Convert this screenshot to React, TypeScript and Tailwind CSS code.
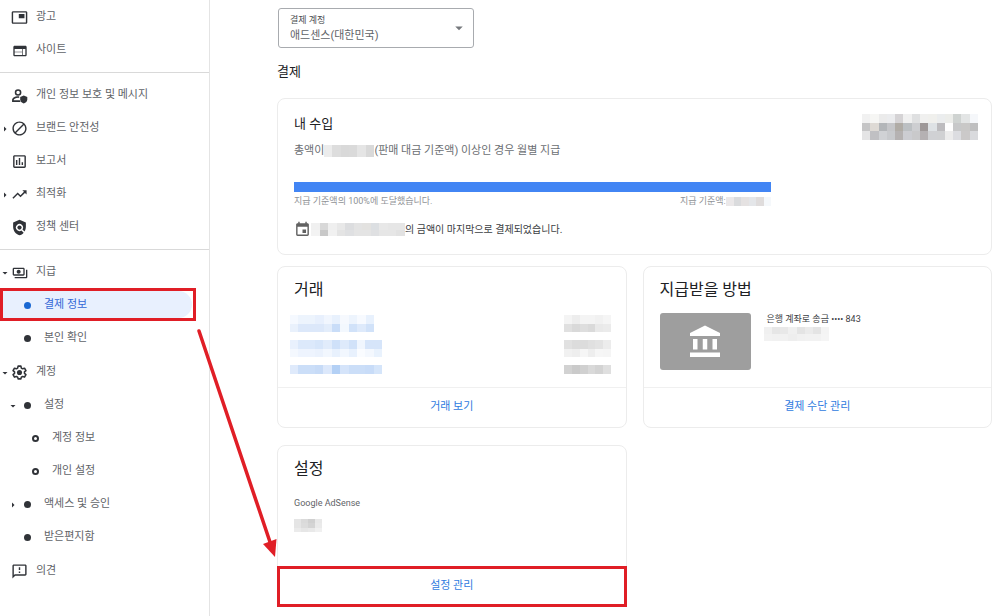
import React from 'react';
import {
  MdAccountBalance,
  MdArrowDropDown,
  MdArrowRight,
  MdBlock,
  MdEvent,
  MdOutlineAssessment,
  MdOutlineFeedback,
  MdOutlinePayments,
  MdPictureInPicture,
  MdPolicy,
  MdTrendingUp,
  MdWeb,
} from 'react-icons/md';

function PrivacyIcon() {
  return (
    <svg viewBox="0 0 24 24" width="17" height="17" fill="currentColor">
      <path
        fillRule="evenodd"
        d="M10 3a4.700 4.700 0 1 0 0 9.400A4.700 4.700 0 0 0 10 3zm0 2.200a2.500 2.500 0 1 1 0 5 2.500 2.500 0 0 1 0-5z"
      />
      <path d="M10 13c-4 0-8.500 1.900-8.500 5.300V21h12a9 9 0 0 1-1-2.300H3.800v-.4c0-1.200 3.200-3 6.200-3l1.500.1V13.100z" />
      <path d="M18 12l-5 2v3.300c0 3 2 5 5 5.900 3-.9 5-2.900 5-5.900V14z" />
    </svg>
  );
}

function GearIcon() {
  return (
    <svg viewBox="0 0 24 24" width="17" height="17" fill="none" stroke="currentColor">
      <path
        strokeWidth="2.200"
        strokeLinejoin="round"
        d="M10 3h4l.6 2.800 1.800 1 2.700-.9 2 3.500-2.100 1.800v2l2.100 1.800-2 3.500-2.700-.9-1.800 1L14 21h-4l-.6-2.400-1.800-1-2.700.9-2-3.500L5 13.200v-2L2.900 9.400l2-3.500 2.700.9 1.800-1z"
      />
      <circle cx="12" cy="12" r="3.600" fill="currentColor" stroke="none" />
    </svg>
  );
}

function Dot() {
  return <span className="block h-[7px] w-[7px] rounded-full bg-current" />;
}

function Ring() {
  return <span className="block h-[7px] w-[7px] rounded-full border-2 border-current" />;
}

// 가려진 값을 대신하는 모자이크
function Mosaic({ rows, className }: { rows: string[]; className: string }) {
  const cells = rows.map((row) => row.split(' '));
  return (
    <svg
      className={`shrink-0 ${className}`}
      viewBox={`0 0 ${cells[0].length} ${cells.length}`}
      preserveAspectRatio="none"
      shapeRendering="crispEdges"
      aria-hidden="true"
    >
      {cells.map((row, y) =>
        row.map((color, x) => <rect key={`${x}-${y}`} x={x} y={y} width="1" height="1" fill={`#${color}`} />)
      )}
    </svg>
  );
}

interface NavItemProps {
  label: string;
  icon: React.ReactNode;
  level?: 0 | 1 | 2;
  arrow?: 'right' | 'down';
  active?: boolean;
  children?: React.ReactNode;
}

const indents = ['pl-0', 'pl-2', 'pl-4'];

function NavItem({ label, icon, level = 0, arrow, active, children }: NavItemProps) {
  return (
    <li>
      <div className={active ? 'relative mr-[13px] py-[3px] pr-1' : ''}>
        <a
          href="#"
          aria-current={active ? 'page' : undefined}
          className={`flex items-center ${indents[level]} ${
            active ? 'h-[27px] rounded-r-full bg-[#e8f0fe] text-[#3367d6]' : 'h-[33px] text-[#5f6368]'
          }`}
        >
          <span className={`flex items-center pt-0.5 ${active ? 'text-[#1967d2]' : 'text-[#303338]'}`}>
            <span className="-ml-px flex w-3 justify-center">
              {arrow === 'right' && <MdArrowRight size={12} />}
              {arrow === 'down' && <MdArrowDropDown size={12} />}
            </span>
            <span className="flex w-[17px] justify-center">{icon}</span>
          </span>
          <span className="pt-0.5 pl-2">{label}</span>
        </a>
        {active && <span className="pointer-events-none absolute inset-0 border-[3px] border-[#e01e26]" />}
      </div>
      {children && <ul className={level === 0 ? 'pb-px' : ''}>{children}</ul>}
    </li>
  );
}

function Sidebar() {
  return (
    <nav className="w-[210px] shrink-0 border-r border-[#e4e4e4] text-[11px]">
      <ul className="border-b border-[#d9d9d9] pb-1.5">
        <NavItem label="광고" icon={<MdPictureInPicture size={17} />} />
        <NavItem label="사이트" icon={<MdWeb size={16} />} />
      </ul>
      <ul className="border-b border-[#d9d9d9] pt-[5px] pb-1.5">
        <NavItem label="개인 정보 보호 및 메시지" icon={<PrivacyIcon />} />
        <NavItem label="브랜드 안전성" icon={<MdBlock size={17} />} arrow="right" />
        <NavItem label="보고서" icon={<MdOutlineAssessment size={17} />} />
        <NavItem label="최적화" icon={<MdTrendingUp size={17} />} arrow="right" />
        <NavItem label="정책 센터" icon={<MdPolicy size={17} />} />
      </ul>
      <ul className="pt-[5px]">
        <NavItem label="지급" icon={<MdOutlinePayments size={16} />} arrow="down">
          <NavItem label="결제 정보" icon={<Dot />} level={1} active />
          <NavItem label="본인 확인" icon={<Dot />} level={1} />
        </NavItem>
        <NavItem label="계정" icon={<GearIcon />} arrow="down">
          <NavItem label="설정" icon={<Dot />} level={1} arrow="down">
            <NavItem label="계정 정보" icon={<Ring />} level={2} />
            <NavItem label="개인 설정" icon={<Ring />} level={2} />
          </NavItem>
          <NavItem label="액세스 및 승인" icon={<Dot />} level={1} arrow="right" />
          <NavItem label="받은편지함" icon={<Dot />} level={1} />
        </NavItem>
        <NavItem label="의견" icon={<MdOutlineFeedback size={17} />} />
      </ul>
    </nav>
  );
}

interface CardProps {
  title: string;
  action: string;
  highlighted?: boolean;
  children: React.ReactNode;
}

function Card({ title, action, highlighted, children }: CardProps) {
  return (
    <section className="flex flex-col rounded-lg border border-[#ececec]">
      <div className="grow px-4 pt-[11px] pb-[13px]">
        <h2 className="text-[16px] leading-6 text-[#202124]">{title}</h2>
        {children}
      </div>
      <div className="relative flex h-10 border-t border-[#f0f0f0]">
        <button type="button" className="w-full text-[11px] text-[#2f7be0]">
          {action}
        </button>
        {highlighted && <span className="pointer-events-none absolute -inset-px border-[3px] border-[#e01e26]" />}
      </div>
    </section>
  );
}

const transactions = [
  {
    id: 1,
    date: [
      'f5f9ff edf4fd edf4fd e8f0fd f1f6fe e8f1fd f6f9fe edf4fd f7faff e8f1fd',
      'e9f1fc dce8fa dce8fa dce8fa e3edfb c9ddf8 f3f8fe d1e2f9 deeafb d1e2f9',
    ],
    dateSize: 'h-[17px] w-[84px]',
    amount: ['f4f4f4 ededed f4f4f4 f4f4f4 f1f1f1 f5f5f5', 'e0e0e0 d9d9d9 dedede dadada e9e9e9 ebebeb'],
    height: 'h-[17px]',
  },
  {
    id: 2,
    date: [
      'e9f1fd dce9fb dce9fb d7e6fa e1ecfb cfe1f9 deeafb d1e2f9 f0f6fe d6e5fa d6e5fa',
      'f4f8fe eef4fe eef4fe ebf2fd f2f7fe e8f1fd f2f7fe e8f1fd fafcff f4f8fe e9f2fd',
    ],
    dateSize: 'h-[17px] w-[92px]',
    amount: ['e1e1e1 dcdcdc dcdcdc e0e0e0 e3e3e3 ececec', 'f1f1f1 eeeeee f6f6f6 eeeeee f6f6f6 f5f5f5'],
    height: 'h-[17px]',
  },
  {
    id: 3,
    date: ['dfeafb cbdef8 cbdef8 c7dbf7 dce8fb b3d0f5 d5e4fa cbdef8 cbdef8 c8dcf8 d5e5fa'],
    dateSize: 'h-[9px] w-[92px]',
    amount: ['d2d2d2 cacaca d0d0d0 d9d9d9 d3d3d3 dfdfdf'],
    height: 'h-[9px]',
  },
];

export default function App() {
  return (
    <div className="relative flex min-h-screen bg-white font-[Roboto,'Noto_Sans_CJK_KR',sans-serif]">
      <Sidebar />

      <main className="min-w-0 flex-1 pt-2 pr-2 pl-[67px]">
        <div className="relative ml-px h-10 w-[196px] rounded-[3px] border border-[#a8abaf]">
          <label
            htmlFor="account"
            className="pointer-events-none absolute top-[3px] left-[11px] text-[9px] leading-4 text-[#4b4e52]"
          >
            결제 계정
          </label>
          <select
            id="account"
            className="h-full w-full appearance-none bg-transparent pt-4 pl-[11px] text-[11px] text-[#5f6368]"
          >
            <option>애드센스(대한민국)</option>
          </select>
          <MdArrowDropDown
            size={18}
            className="pointer-events-none absolute top-1/2 right-[5px] -translate-y-1/2 text-[#75787c]"
          />
        </div>

        <h1 className="mt-3.5 text-[13px] leading-5 text-[#202124]">결제</h1>

        <section className="mt-4 flex justify-between rounded-lg border border-[#ececec] px-4 pt-[15px] pb-4">
          <div className="w-[70%]">
            <h2 className="text-[13px] leading-5 text-[#202124]">내 수입</h2>
            <p className="mt-[9px] flex items-center text-[11px] leading-4 text-[#6b6e72]">
              총액이
              <Mosaic className="h-3 w-[50px]" rows={['ececec dddddd d9d9d9 dadada e5e5e5 d9d9d9']} />
              (판매 대금 기준액) 이상인 경우 월별 지급
            </p>
            <div className="mt-[23px] h-2.5 bg-[#4285f4]" />
            <div className="flex justify-between pt-px text-[9px] leading-4 text-[#8f9296]">
              <span>지급 기준액의 100%에 도달했습니다.</span>
              <span className="flex items-center">
                지급 기준액:
                <Mosaic className="h-[9px] w-[45px]" rows={['ebe8e9 dadbdd e5e2e2 e4e6e9 dfdcdc f5f8fb']} />
              </span>
            </div>
            <p className="mt-3 flex items-center text-[10px] leading-4 text-[#3c4043]">
              <MdEvent size={17} className="text-[#616161]" />
              <Mosaic
                className="h-[13px] w-[94px]"
                rows={[
                  'f0f0f0 d8d8d8 efefef e8e8e8 dcdddf e3e3e3 e3e2e0 dcdfe2 e8e8e8 e6e6e6 e6e6e6',
                  'f3f3f3 c8c8c8 f1f1f1 e4e4e4 dfe0e2 e4e4e4 e4e4e4 dfe0e2 e6e6e6 e6e6e6 e2e2e2',
                ]}
              />
              의 금액이 마지막으로 결제되었습니다.
            </p>
          </div>
          <Mosaic
            className="-mr-[3px] h-[26px] w-[116px]"
            rows={[
              'f1f1f1 f6f6f4 ebebeb ebecee d5d3d5 f0f0f0 dfe0e1 f0f0ef f0f0ed ebedee ecedea cfd3d1 e3e5e5 f5f7fa',
              'c5c5c6 dedad5 b3b6b9 c5c6c9 b0aca6 bcc0c3 cdced1 9e9898 dee2e5 bdbcbf fefefe c7c8c9 c9c8c7 bfbfc0',
              'e4e4e5 c0c0c3 d0d2d5 c8cacd b5b2b2 cccdd2 c9c9cb b5b1b3 d0d1d4 d0d1d3 ececec dcdde1 cbc9c9 d9dadd',
            ]}
          />
        </section>

        <div className="mt-[11px] grid auto-rows-fr grid-cols-2 gap-x-4 gap-y-[17px]">
          <Card title="거래" action="거래 보기">
            <ul className="-mx-1 mt-[13px] flex flex-col gap-2 pr-[3px]">
              {transactions.map((t) => (
                <li key={t.id} className="flex justify-between">
                  <Mosaic className={t.dateSize} rows={t.date} />
                  <Mosaic className={`w-[47px] ${t.height}`} rows={t.amount} />
                </li>
              ))}
            </ul>
          </Card>

          <Card title="지급받을 방법" action="결제 수단 관리">
            <div className="mt-[11px] flex">
              <div className="flex h-[57px] w-[91px] items-center justify-center rounded-[3px] bg-[#9e9e9e]">
                <MdAccountBalance size={36} className="text-white" />
              </div>
              <div className="pl-[13px]">
                <p className="pl-[3px] text-[9px] leading-3 text-[#3c4043]">은행 계좌로 송금 •••• 843</p>
                <Mosaic
                  className="mt-0.5 h-[14px] w-[65px]"
                  rows={[
                    'f0f0f0 e6e6e6 e8e8e8 f0f0f0 e4e4e4 ebebeb e4e4e4 f4f4f4',
                    'f2f2f2 f1f1f1 f1f1f1 eeeeee f1f1f1 f2f2f2 f2f2f2 f5f5f5',
                  ]}
                />
              </div>
            </div>
          </Card>

          <Card title="설정" action="설정 관리" highlighted>
            <p className="mt-3.5 text-[9px] leading-4 text-[#5f6368]">Google AdSense</p>
            <Mosaic
              className="mt-2 h-[13px] w-[28px]"
              rows={['e5e5e5 dadada d0d0d0 e8e8e8', 'e5e5e5 dcdcdc d4d4d4 eaeaea', 'ebebeb e6e6e6 e9e9e9 f0f0f0']}
            />
          </Card>
        </div>
      </main>

      <svg
        className="pointer-events-none absolute top-0 left-0"
        width="300"
        height="600"
        viewBox="0 0 300 600"
        aria-hidden="true"
      >
        <line x1="199" y1="331" x2="270" y2="542" stroke="#e01e26" strokeWidth="3.500" strokeLinecap="round" />
        <path d="M275 557l-12-13 13.500-5z" fill="#e01e26" />
      </svg>
    </div>
  );
}
